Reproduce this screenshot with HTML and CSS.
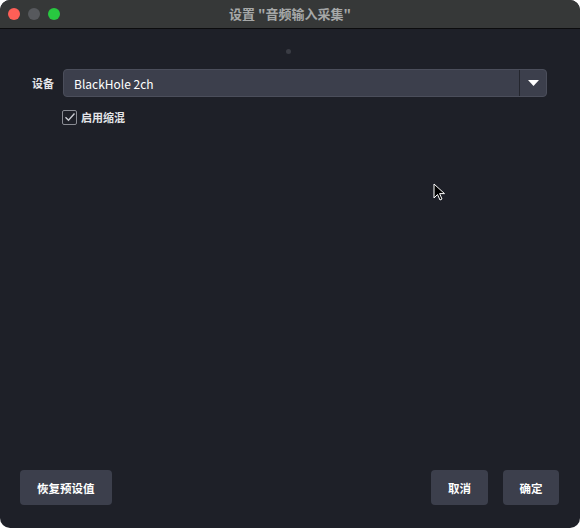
FILE: index.html
```html
<!DOCTYPE html>
<html>
<head>
    <title>设置 "音频输入采集"</title>
    <link rel="stylesheet" href="styles.css">
</head>
<body>
    <div class="window">
        <div class="titlebar">
            <div class="lights">
                <span class="light red"></span>
                <span class="light gray"></span>
                <span class="light green"></span>
            </div>
            <div class="title">设置 "音频输入采集"</div>
        </div>

        <div class="content">
            <div class="handle"></div>

            <div class="form-row">
                <label class="row-label">设备</label>
                <div class="combo">
                    <span class="combo-text">BlackHole 2ch</span>
                    <span class="combo-arrow">
                        <svg width="11" height="6" viewBox="0 0 11 6"><polygon points="0,0 11,0 5.5,6" fill="#ffffff"/></svg>
                    </span>
                </div>
            </div>

            <div class="check-row">
                <span class="checkbox">
                    <svg width="12" height="10" viewBox="0 0 12 10"><polyline points="1.5,5.2 4.5,8.2 10.5,1.5" fill="none" stroke="#c9cbd2" stroke-width="1.4"/></svg>
                </span>
                <span class="check-label">启用缩混</span>
            </div>

            <div class="spacer"></div>

            <div class="button-bar">
                <button class="btn">恢复预设值</button>
                <div class="right-buttons">
                    <button class="btn">取消</button>
                    <button class="btn">确定</button>
                </div>
            </div>
        </div>

        <!-- mouse pointer -->
        <svg class="cursor" width="14" height="20" viewBox="0 0 14 20">
            <path d="M1 1 L1 15 L4.5 11.5 L7 17 L9 16 L6.6 10.6 L11.5 10.6 Z" fill="#000" stroke="#fff" stroke-width="1"/>
        </svg>
    </div>
</body>
</html>
```

FILE: styles.css
```css
html, body {
    margin: 0;
    padding: 0;
    background: #ffffff;
}
.window {
    position: relative;
    width: 580px;
    height: 528px;
    background: #1e2028;
    border-radius: 10px;
    overflow: hidden;
    display: flex;
    flex-direction: column;
    font-family: "Noto Sans CJK SC", "Noto Sans", sans-serif;
}
.titlebar {
    position: relative;
    height: 28px;
    background: #363838;
    border-bottom: 1px solid #0c0c0e;
    display: flex;
    align-items: center;
    flex-shrink: 0;
}
.lights {
    display: flex;
    gap: 8px;
    padding-left: 8px;
}
.light {
    width: 12px;
    height: 12px;
    border-radius: 50%;
}
.light.red { background: #fe5f57; }
.light.gray { background: #57595d; }
.light.green { background: #28c840; }
.title {
    position: absolute;
    left: 0;
    right: 0;
    text-align: center;
    color: #a6a8a8;
    font-size: 13px;
    font-weight: bold;
    top: 4px;
}
.content {
    flex: 1;
    display: flex;
    flex-direction: column;
    padding: 0 21px 23px 20px;
}
.handle {
    width: 5px;
    height: 5px;
    border-radius: 50%;
    background: #3a3c44;
    align-self: center;
    margin-top: 20px;
    margin-right: 2px;
}
.form-row {
    display: flex;
    align-items: center;
    margin-top: 15px;
    margin-right: 12px;
}
.row-label {
    color: #e4e5e8;
    font-size: 11px;
    font-weight: bold;
    width: 43px;
    text-align: right;
    padding-right: 9px;
    box-sizing: border-box;
    flex-shrink: 0;
}
.combo {
    flex: 1;
    height: 28px;
    box-sizing: border-box;
    background: #3c3f4c;
    border: 1px solid #4b4e5b;
    border-radius: 4px;
    display: flex;
    align-items: center;
}
.combo-text {
    flex: 1;
    color: #ffffff;
    font-size: 12px;
    padding-left: 10px;
}
.combo-arrow {
    width: 26px;
    height: 100%;
    border-left: 1px solid #24262e;
    display: flex;
    align-items: center;
    justify-content: center;
}
.check-row {
    display: flex;
    align-items: center;
    margin-top: 12px;
    margin-left: 42px;
}
.checkbox {
    width: 13px;
    height: 13px;
    border: 1px solid #8a8c94;
    border-radius: 2px;
    display: flex;
    align-items: center;
    justify-content: center;
}
.check-label {
    color: #e4e5e8;
    font-size: 11px;
    font-weight: bold;
    margin-left: 4px;
}
.spacer {
    flex: 1;
}
.button-bar {
    display: flex;
    justify-content: space-between;
}
.right-buttons {
    display: flex;
    gap: 15px;
}
.btn {
    height: 35px;
    min-width: 56px;
    padding: 0 16px;
    background: #3c3f4c;
    border: none;
    border-radius: 4px;
    color: #ffffff;
    font-family: "Noto Sans CJK SC", "Noto Sans", sans-serif;
    font-size: 11.5px;
    font-weight: bold;
}
.btn:first-child {
    padding: 0 17px;
}
.cursor {
    position: absolute;
    left: 433px;
    top: 183px;
}
```
